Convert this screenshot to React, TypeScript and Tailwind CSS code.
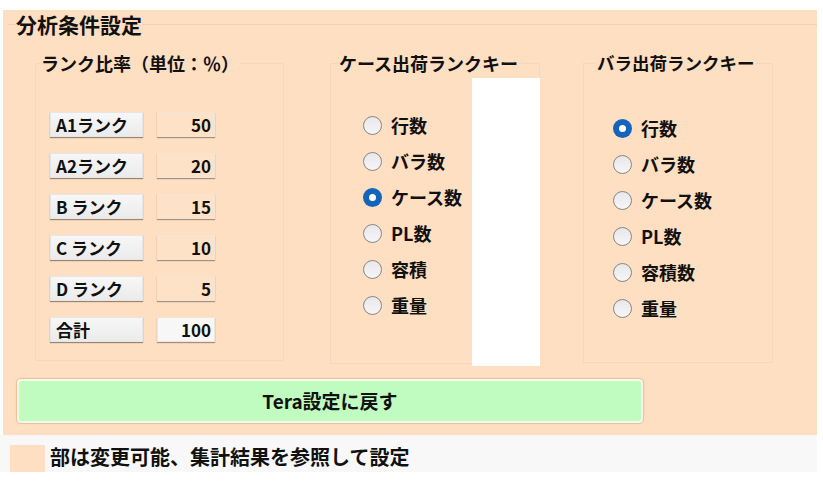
import React from 'react';

const rankRows = [
  { label: 'A1ランク', value: '50' },
  { label: 'A2ランク', value: '20' },
  { label: 'B ランク', value: '15' },
  { label: 'C ランク', value: '10' },
  { label: 'D ランク', value: '5' },
  { label: '合計', value: '100', total: true },
];

const caseKeys = ['行数', 'バラ数', 'ケース数', 'PL数', '容積', '重量'];
const baraKeys = ['行数', 'バラ数', 'ケース数', 'PL数', '容積数', '重量'];

const Radio = ({ checked, label }: { checked: boolean; label: string }) => (
  <div className="flex items-center h-[36px] gap-[9px]">
    {checked ? (
      <span className="w-[19px] h-[19px] rounded-full bg-[#1463bd] flex items-center justify-center">
        <span className="w-[7px] h-[7px] rounded-full bg-white" />
      </span>
    ) : (
      <span className="w-[19px] h-[19px] rounded-full border-[1.5px] border-[#858585] bg-gradient-to-b from-[#e8e8ea] to-[#f6f6f8]" />
    )}
    <span className="text-[18px] font-bold text-[#111] leading-none">{label}</span>
  </div>
);

const App = () => {
  return (
    <div
      className="w-[823px] h-[482px] bg-white pt-[10px] text-[#111]"
      style={{ fontFamily: '"Noto Sans CJK JP", "Noto Sans", sans-serif' }}
    >
      {/* main peach panel */}
      <div className="ml-[3px] w-[814px] h-[425px] bg-[#ffdfc1]">
        <fieldset className="ml-[5px] pl-[8px] border-0 border-t border-[#f1d2b5]">
          <legend className="text-[21px] font-bold leading-[28px]">分析条件設定</legend>

          <div className="flex items-start mt-[13px]">
            {/* rank ratio */}
            <fieldset className="ml-[19px] w-[249px] h-[310px] border border-[#f3d8c0]">
              <legend className="ml-[4px] px-[1px] text-[18px] font-bold leading-[24px]">ランク比率（単位：％）</legend>
              <div className="ml-[14px] mt-[37px] flex flex-col gap-[16px]">
                {rankRows.map((r) => (
                  <div key={r.label} className="flex items-center gap-[14px]">
                    <div className="w-[93px] h-[25px] pl-[5px] flex items-center bg-gradient-to-b from-[#f7f7f7] to-[#ebebeb] border border-[#e6e6e6] shadow-[0_1px_1px_rgba(0,0,0,0.4)] text-[17px] font-bold leading-none whitespace-pre">
                      {r.label}
                    </div>
                    <div
                      className={`w-[58px] h-[25px] pr-[3px] flex items-center justify-end border border-[#f2e4d6] shadow-[0_1px_1px_rgba(0,0,0,0.35)] text-[17px] font-bold leading-none ${
                        r.total ? 'bg-[#f7f7f7]' : 'bg-[#fde2c7]'
                      }`}
                    >
                      {r.value}
                    </div>
                  </div>
                ))}
              </div>
            </fieldset>

            {/* case shipping rank key */}
            <fieldset className="ml-[46px] w-[210px] h-[313px] border border-[#f3d8c0]">
              <legend className="ml-[7px] px-[1px] text-[18px] font-bold leading-[24px]">ケース出荷ランクキー</legend>
              <div className="flex items-start h-full">
                <div className="ml-[32px] mt-[32px] flex flex-col">
                  {caseKeys.map((k) => (
                    <Radio key={k} label={k} checked={k === 'ケース数'} />
                  ))}
                </div>
                <div className="ml-auto -mr-[1px] mt-[3px] w-[68px] h-[288px] bg-white" />
              </div>
            </fieldset>

            {/* bara shipping rank key */}
            <fieldset className="ml-[43px] w-[190px] h-[312px] border border-[#f3d8c0]">
              <legend className="ml-[12px] px-[1px] text-[17.5px] font-bold leading-[24px]">バラ出荷ランクキー</legend>
              <div className="ml-[29px] mt-[35px] flex flex-col">
                {baraKeys.map((k) => (
                  <Radio key={k} label={k} checked={k === '行数'} />
                ))}
              </div>
            </fieldset>
          </div>

          <button className="ml-[1px] mt-[15px] w-[626px] h-[44px] rounded-[4px] bg-[#c0fbbf] border-2 border-[#f6f8ea] shadow-[0_0_1px_1px_rgba(190,150,110,0.45)] text-[19px] font-bold text-[#111] flex items-center justify-center">
            Tera設定に戻す
          </button>
        </fieldset>
      </div>

      {/* legend note */}
      <div className="w-[817px] h-[37px] bg-[#f8f8f8] flex items-end">
        <div className="ml-[10px] w-[35px] h-[27px] bg-[#ffdfc1]" />
        <span className="ml-[5px] mb-[2px] text-[20px] font-bold leading-[26px]">部は変更可能、集計結果を参照して設定</span>
      </div>
    </div>
  );
};

export default App;
